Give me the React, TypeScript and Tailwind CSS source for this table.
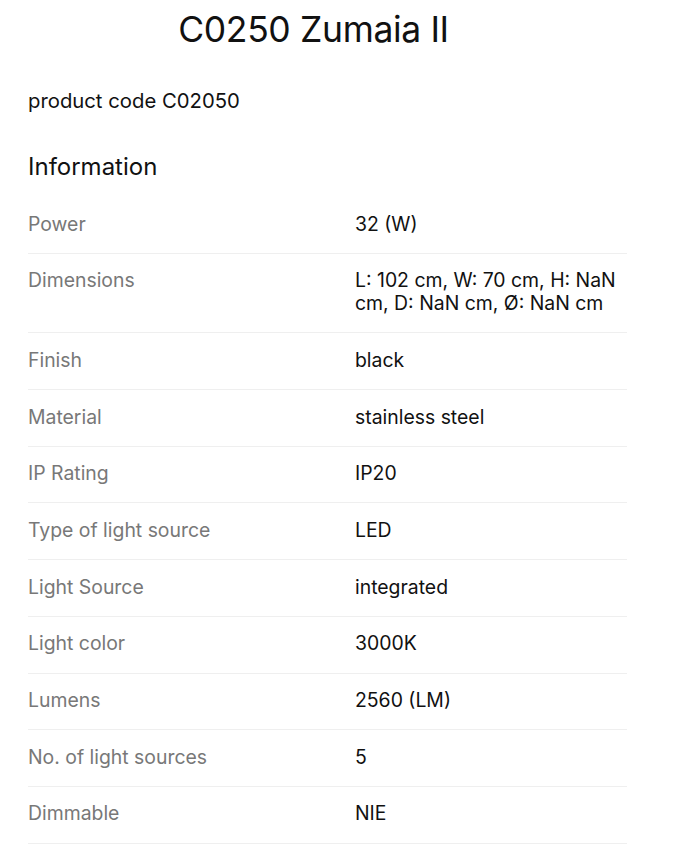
const specs: { label: string; value: string }[] = [
  { label: "Power", value: "32 (W)" },
  { label: "Dimensions", value: "L: 102 cm, W: 70 cm, H: NaN cm, D: NaN cm, Ø: NaN cm" },
  { label: "Finish", value: "black" },
  { label: "Material", value: "stainless steel" },
  { label: "IP Rating", value: "IP20" },
  { label: "Type of light source", value: "LED" },
  { label: "Light Source", value: "integrated" },
  { label: "Light color", value: "3000K" },
  { label: "Lumens", value: "2560 (LM)" },
  { label: "No. of light sources", value: "5" },
  { label: "Dimmable", value: "NIE" },
];

export default function App() {
  return (
    <main className="min-h-screen bg-white font-['Inter',sans-serif] text-[#111]">
      <div className="w-[627px]">
        <h1 className="pt-[8px] text-center text-[35.5px] leading-[44px] font-normal tracking-[-0.01em]">
          C0250 Zumaia II
        </h1>
      </div>

      <div className="w-[627px] pl-[28px]">
        <p className="mt-[37px] text-[20.3px] leading-[24px]">product code C02050</p>

        <h2 className="mt-[39px] text-[24px] leading-[30px]">Information</h2>

        <dl className="mt-[15px]">
          {specs.map(({ label, value }) => (
            <div
              key={label}
              className="grid grid-cols-[327px_minmax(0,1fr)] border-b border-[#efefef] pt-[15.5px] pb-[17.2px] text-[19.4px] leading-[23px]"
            >
              <dt className="text-[#787878]">{label}</dt>
              <dd className="text-[#111]">{value}</dd>
            </div>
          ))}
        </dl>
      </div>
    </main>
  );
}
